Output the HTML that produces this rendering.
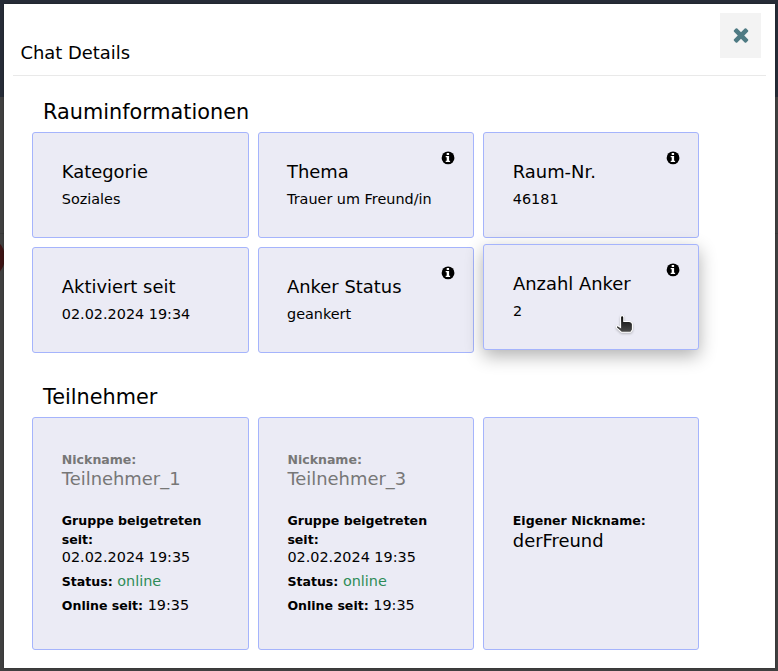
<!DOCTYPE html>
<html lang="de">
<head>
<meta charset="utf-8">
<title>Chat Details</title>
<style>
*{box-sizing:border-box;margin:0;padding:0}
html,body{width:778px;height:671px;overflow:hidden}
body{position:relative;background:#404040;font-family:"DejaVu Sans","Liberation Sans",sans-serif;color:#000;}
.topbar{position:absolute;left:0;top:0;width:778px;height:97px;background:#262c37}
.reddot{position:absolute;left:-38px;top:235.700px;width:43px;height:43px;border-radius:50%;background:#3d1414}
.ln{position:absolute;left:0;top:233px;width:778px;height:1px;background:#393939}
.modal{position:absolute;left:4px;top:4px;width:771px;height:664px;background:#fff;box-shadow:0 0 2px rgba(0,0,0,.35)}
.close{position:absolute;left:716px;top:9px;width:41px;height:45px;background:#f3f3f3}
.close svg{position:absolute;left:10px;top:12px}
.title{position:absolute;left:16.500px;top:38px;font-size:17.920px;line-height:22px;white-space:nowrap}
.hr{position:absolute;left:9px;top:71px;width:753px;height:1px;background:#e9e9e9}
h2{position:absolute;left:39px;font-size:20.800px;line-height:26px;font-weight:normal;white-space:nowrap}
.card{position:absolute;height:106px;background:#ebebf5;border:1px solid #a5b4fc;border-radius:3px}
.card .t{position:absolute;top:27px;font-size:17.920px;line-height:24px;white-space:nowrap}
.card .v{position:absolute;top:56px;font-size:14.400px;line-height:20px;white-space:nowrap}
.card .i{position:absolute;left:182.200px;top:17.700px}
.card.hover{box-shadow:0 6px 18px rgba(0,0,0,.31)}
.p{height:233px}
.p div{position:absolute;white-space:nowrap}
.lbl{font-weight:bold;font-size:12.560px;line-height:19px}
.gray{color:#777}
.big{font-size:17.920px;line-height:24px}
.val{font-size:14.400px;line-height:19px}
.on{color:#2e8b57}
.cursor{position:absolute;left:610px;top:308px;filter:drop-shadow(0 1px 1px rgba(0,0,0,.25))}
</style>
</head>
<body>
<div class="topbar"></div>
<div class="reddot"></div>
<div class="ln"></div>
<div class="modal">
  <div class="close"><svg width="22" height="22" viewBox="0 0 22 22"><g transform="translate(11 10.500) rotate(45)" fill="#4e7a83"><rect x="-8.650" y="-2.300" width="17.300" height="4.600" rx="1.100"/><rect x="-2.300" y="-8.650" width="4.600" height="17.300" rx="1.100"/></g></svg></div>
  <div class="title">Chat Details</div>
  <div class="hr"></div>

  <h2 style="top:95px">Rauminformationen</h2>

  <div class="card" style="left:28px;top:128px;width:217px"><div class="t" style="left:28.8px">Kategorie</div><div class="v" style="left:28.8px">Soziales</div></div>
  <div class="card" style="left:254px;top:128px;width:216px"><div class="t" style="left:28px">Thema</div><div class="v" style="left:28px">Trauer um Freund/in</div><svg class="i" width="14" height="14" viewBox="0 0 14 14"><circle cx="7.050" cy="6.900" r="6.400" fill="#000"/><path d="M5.700 2.100h2.400v1.800h-2.400z M4.700 5.000h3.400v4.800h1.000v1.200h-4.400v-1.200h1.000v-3.600h-1.000z" fill="#fff"/></svg></div>
  <div class="card" style="left:479px;top:128px;width:216px"><div class="t" style="left:28.8px">Raum-Nr.</div><div class="v" style="left:28.8px">46181</div><svg class="i" width="14" height="14" viewBox="0 0 14 14"><circle cx="7.050" cy="6.900" r="6.400" fill="#000"/><path d="M5.700 2.100h2.400v1.800h-2.400z M4.700 5.000h3.400v4.800h1.000v1.200h-4.400v-1.200h1.000v-3.600h-1.000z" fill="#fff"/></svg></div>

  <div class="card" style="left:28px;top:243px;width:217px"><div class="t" style="left:28.8px">Aktiviert seit</div><div class="v" style="left:28.8px">02.02.2024 19:34</div></div>
  <div class="card" style="left:254px;top:243px;width:216px"><div class="t" style="left:28px">Anker Status</div><div class="v" style="left:28px">geankert</div><svg class="i" width="14" height="14" viewBox="0 0 14 14"><circle cx="7.050" cy="6.900" r="6.400" fill="#000"/><path d="M5.700 2.100h2.400v1.800h-2.400z M4.700 5.000h3.400v4.800h1.000v1.200h-4.400v-1.200h1.000v-3.600h-1.000z" fill="#fff"/></svg></div>
  <div class="card hover" style="left:479px;top:240px;width:216px"><div class="t" style="left:29px">Anzahl Anker</div><div class="v" style="left:29px">2</div><svg class="i" width="14" height="14" viewBox="0 0 14 14"><circle cx="7.050" cy="6.900" r="6.400" fill="#000"/><path d="M5.700 2.100h2.400v1.800h-2.400z M4.700 5.000h3.400v4.800h1.000v1.200h-4.400v-1.200h1.000v-3.600h-1.000z" fill="#fff"/></svg></div>

  <h2 style="top:380px">Teilnehmer</h2>

  <div class="card p" style="left:28px;top:413px;width:217px">
    <div class="lbl gray" style="left:28.8px;top:32px">Nickname:</div>
    <div class="big gray" style="left:28.8px;top:49px">Teilnehmer_1</div>
    <div class="lbl" style="left:28.8px;top:93px">Gruppe beigetreten<br>seit:</div>
    <div class="val" style="left:28.8px;top:130px">02.02.2024 19:35</div>
    <div class="val" style="left:28.8px;top:154px"><b class="lbl">Status:</b> <span class="on">online</span></div>
    <div class="val" style="left:28.8px;top:178px"><b class="lbl">Online seit:</b> 19:35</div>
  </div>
  <div class="card p" style="left:254px;top:413px;width:216px">
    <div class="lbl gray" style="left:28.4px;top:32px">Nickname:</div>
    <div class="big gray" style="left:28.4px;top:49px">Teilnehmer_3</div>
    <div class="lbl" style="left:28.4px;top:93px">Gruppe beigetreten<br>seit:</div>
    <div class="val" style="left:28.4px;top:130px">02.02.2024 19:35</div>
    <div class="val" style="left:28.4px;top:154px"><b class="lbl">Status:</b> <span class="on">online</span></div>
    <div class="val" style="left:28.4px;top:178px"><b class="lbl">Online seit:</b> 19:35</div>
  </div>
  <div class="card p" style="left:479px;top:413px;width:216px">
    <div class="lbl" style="left:28.800px;top:93px">Eigener Nickname:</div>
    <div class="big" style="left:28.800px;top:111px">derFreund</div>
  </div>

  <svg class="cursor" width="24" height="26" viewBox="0 0 24 26"><defs><linearGradient id="hg" x1="0" y1="0" x2="0" y2="1"><stop offset="0" stop-color="#0a0a0a"/><stop offset="1" stop-color="#4a4a4a"/></linearGradient></defs><path d="M7.100 5.400 Q7.100 4.300 8.150 4.300 Q9.200 4.300 9.200 5.400 L9.200 9.900 L15.200 10.000 Q17.900 10.600 17.900 12.200 L17.900 17.600 L16.500 19.700 L7.700 19.700 L3.000 15.400 Q2.600 14.600 3.500 14.200 L7.100 16.600 Z" fill="url(#hg)" stroke="#fff" stroke-width="2" stroke-linejoin="round" paint-order="stroke fill"/></svg>
</div>
</body>
</html>
